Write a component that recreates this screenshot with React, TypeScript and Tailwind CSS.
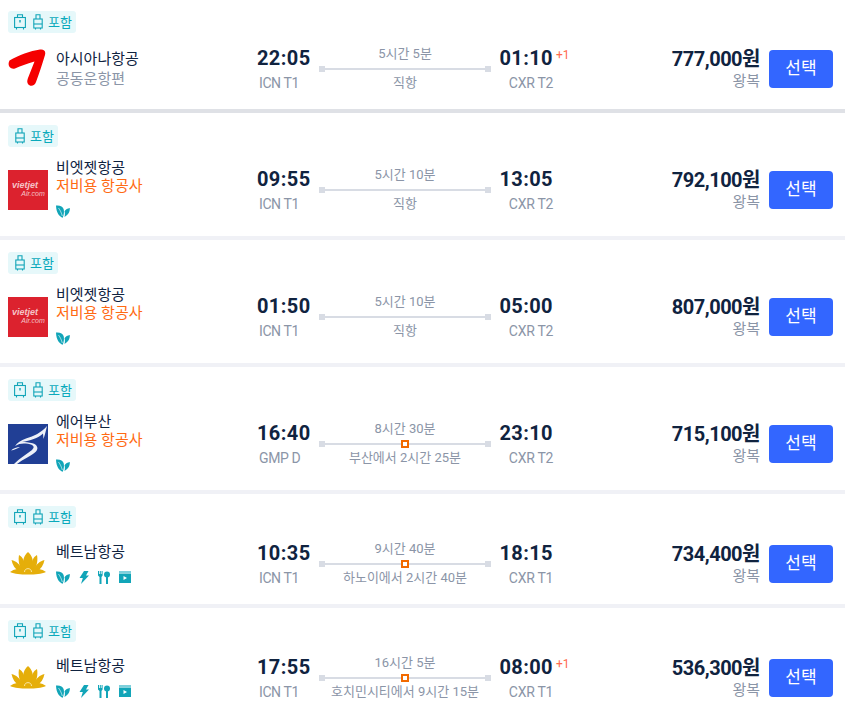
const TXT = "font-['Roboto','Noto_Sans_CJK_KR',sans-serif]";

function BagWide() {
  return (
    <svg width="12" height="16" viewBox="0 0 12 16" fill="none" stroke="#12a5b8" strokeWidth="1.1">
      <path d="M3.500 3.500V.8h5v2.700" />
      <rect x=".6" y="3.500" width="10.800" height="10" />
      <path d="M6 6v2.500" strokeWidth="1.400" />
      <path d="M2.500 14v1.500M9.500 14v1.500" />
    </svg>
  );
}

function BagSlim() {
  return (
    <svg width="10" height="16" viewBox="0 0 10 16" fill="none" stroke="#12a5b8" strokeWidth="1.1">
      <path d="M3 5V.8h4V5" />
      <rect x=".8" y="5" width="8.400" height="9" />
      <path d="M.8 10h8.400" />
      <path d="M2.500 14v1.500M7.500 14v1.500" />
    </svg>
  );
}

function Leaf() {
  return (
    <svg width="14" height="13" viewBox="0 0 14 13" fill="#12a5b8">
      <path d="M0 .5c3.800-.4 7 .8 7.800 4.200.5 2.800-.2 5.500-1 8C3 11.500.4 8 0 .5z" />
      <path d="M13.800 3c.2 3.500-1.200 6.500-5.300 9 .5-2.200.6-4 0-5.800C9.800 4.500 11.500 3.300 13.800 3z" />
      <path d="M2.500 3c1.800 2.300 3 5 3.800 8" stroke="#fff" strokeWidth=".6" fill="none" />
    </svg>
  );
}

function Bolt() {
  return (
    <svg width="10" height="13" viewBox="0 0 10 13" fill="#12a5b8">
      <path d="M5 0h4.500L7 4.500h3L2 13l1.800-6H.5z" />
    </svg>
  );
}

function Meal() {
  return (
    <svg width="12" height="13" viewBox="0 0 12 13" fill="#12a5b8">
      <path d="M0 0h1v3h.8V0h1v3h.8V0h1v4.500L3.500 6v7h-2V6L0 4.500z" />
      <circle cx="9" cy="3.500" r="3" />
      <rect x="8" y="5" width="2" height="8" />
    </svg>
  );
}

function Screen() {
  return (
    <svg width="12" height="12" viewBox="0 0 12 12">
      <rect x="0" y="0" width="12" height="2" fill="#7fd0dc" />
      <rect x="0" y="2.500" width="12" height="9.500" fill="#12a5b8" />
      <path d="M4.500 5l3.500 2-3.500 2z" fill="#fff" />
    </svg>
  );
}

function Asiana() {
  return (
    <div className="w-10 h-10 shrink-0">
      <svg width="40" height="40" viewBox="0 0 40 40">
        <path
          d="M1.500 11.500 C 11 6 22 2 32 .5 C 36 0 38 2 37 6 C 34 16 31 25 28 33 C 27 37 22 38 20 35 C 19 33 19 32 20 29 L 26.500 12.500 C 20 14 13 17 7 19.500 C 2 21 -1 16 1.500 11.500 Z"
          fill="#f50000"
        />
      </svg>
    </div>
  );
}

function Vietjet() {
  return (
    <div className="w-10 h-10 shrink-0 bg-[#dc222e] flex flex-col items-center justify-center italic font-['Liberation_Sans',sans-serif] text-[#f5c4c8]">
      <span className="text-[9px] leading-[9px] -ml-[6px] font-bold">vietjet</span>
      <span className="text-[7px] leading-[8px] ml-[10px]">Air.com</span>
    </div>
  );
}

function AirBusan() {
  return (
    <div className="w-10 h-10 shrink-0">
      <svg width="40" height="40" viewBox="0 0 40 40">
        <rect width="40" height="40" fill="#213f95" />
        <path
          d="M39 2 C 33 9 26 12 18 14.500 C 13 16 9 19 7 22 C 11 19.500 15 19 20 19.800 C 26 21 27 23 24 26 C 19 30 12 34 6 40 L 9 40 C 15 35 24 31.500 28 27.500 C 31 24.500 29 20.500 24.500 19.300 C 21 18.500 17 18 14 18 C 22 16.500 30 14.500 35 9.500 L 35.500 15 C 37 11 38 6 39 2 Z"
          fill="#eef1f8"
        />
        <path d="M3 26.500 C 5 24.500 9 23 12 23 C 10 24 6 26 3 26.500 Z" fill="#eef1f8" />
      </svg>
    </div>
  );
}

function Lotus() {
  return (
    <div className="w-10 h-10 shrink-0 flex items-center justify-center">
      <svg width="36" height="24" viewBox="0 0 36 24" fill="#e5ae0a">
        <path d="M18 0 C 22.500 4 24 9 22 16 L 14 16 C 12 9 13.500 4 18 0 Z" />
        <path d="M9 3 C 13 5 15 10 15 17 L 12 18 C 9 14 8 8 9 3 Z" />
        <path d="M27 3 C 23 5 21 10 21 17 L 24 18 C 27 14 28 8 27 3 Z" />
        <path d="M1.500 8 C 6 9 10 12 12.500 18 L 9 19 C 5 17 2.500 13 1.500 8 Z" />
        <path d="M34.500 8 C 30 9 26 12 23.500 18 L 27 19 C 31 17 33.500 13 34.500 8 Z" />
        <path d="M0 20 C 4 17 10 16 14 16 L 22 16 C 26 16 32 17 36 20 C 31 22 26 22.500 18 22.500 C 10 22.500 5 22 0 20 Z" />
        <path d="M14.500 20 C 14.500 15.500 21.500 15.500 21.500 20" stroke="#fff3c8" strokeWidth=".8" fill="none" />
      </svg>
    </div>
  );
}

interface Flight {
  bags: number;
  logo: 'asiana' | 'vietjet' | 'busan' | 'vn';
  airline: string;
  sub?: string;
  subOrange?: boolean;
  amenities?: 'leaf' | 'all';
  dep: string;
  depApt: string;
  dur: string;
  via: string;
  stop?: boolean;
  arr: string;
  plus?: boolean;
  arrApt: string;
  price: string;
  sep?: string;
  top?: string;
}

const flights: Flight[] = [
  { bags: 2, logo: 'asiana', airline: '아시아나항공', sub: '공동운항편', dep: '22:05', depApt: 'ICN T1', dur: '5시간 5분', via: '직항', arr: '01:10', plus: true, arrApt: 'CXR T2', price: '777,000', sep: 'border-[#dfe1e6]', top: '-mt-px' },
  { bags: 1, logo: 'vietjet', airline: '비엣젯항공', sub: '저비용 항공사', subOrange: true, amenities: 'leaf', dep: '09:55', depApt: 'ICN T1', dur: '5시간 10분', via: '직항', arr: '13:05', arrApt: 'CXR T2', price: '792,100' },
  { bags: 1, logo: 'vietjet', airline: '비엣젯항공', sub: '저비용 항공사', subOrange: true, amenities: 'leaf', dep: '01:50', depApt: 'ICN T1', dur: '5시간 10분', via: '직항', arr: '05:00', arrApt: 'CXR T2', price: '807,000' },
  { bags: 2, logo: 'busan', airline: '에어부산', sub: '저비용 항공사', subOrange: true, amenities: 'leaf', dep: '16:40', depApt: 'GMP D', dur: '8시간 30분', via: '부산에서 2시간 25분', stop: true, arr: '23:10', arrApt: 'CXR T2', price: '715,100' },
  { bags: 2, logo: 'vn', airline: '베트남항공', amenities: 'all', dep: '10:35', depApt: 'ICN T1', dur: '9시간 40분', via: '하노이에서 2시간 40분', stop: true, arr: '18:15', arrApt: 'CXR T1', price: '734,400' },
  { bags: 2, logo: 'vn', airline: '베트남항공', amenities: 'all', dep: '17:55', depApt: 'ICN T1', dur: '16시간 5분', via: '호치민시티에서 9시간 15분', stop: true, arr: '08:00', plus: true, arrApt: 'CXR T1', price: '536,300' },
];

function Amenities({ kind }: { kind: 'leaf' | 'all' }) {
  return (
    <div className="flex items-center gap-[9px] h-3">
      <Leaf />
      {kind === 'all' && (
        <>
          <Bolt />
          <Meal />
          <Screen />
        </>
      )}
    </div>
  );
}

function FlightRow({ f }: { f: Flight }) {
  const tall = !!f.subOrange;
  return (
    <div className={`pt-3 pb-3 pl-2 pr-3 border-b-4 ${f.sep ?? 'border-[#f0f1f6]'} ${f.top ?? ''}`}>
      <div className={`flex w-fit items-center h-[22px] pr-1 rounded-[3px] bg-[#e6f8fa] ${f.bags === 2 ? 'pl-[6px]' : 'pl-[7px]'}`}>
        {f.bags === 2 && (
          <span className="mr-[7px] flex">
            <BagWide />
          </span>
        )}
        <BagSlim />
        <span className="ml-[5px] text-[13px] text-[#0aa9bb] leading-none">포함</span>
      </div>
      <div className={`mt-2 flex items-center ${tall ? 'h-[69px]' : 'h-14'}`}>
        {f.logo === 'asiana' && <Asiana />}
        {f.logo === 'vietjet' && <Vietjet />}
        {f.logo === 'busan' && <AirBusan />}
        {f.logo === 'vn' && <Lotus />}
        <div className="ml-2 w-[192px] self-start">
          <div className={`text-[15px] leading-[18px] text-[#10233f] ${tall ? 'pt-1' : f.sub ? 'pt-[9px]' : 'pt-[7px]'}`}>{f.airline}</div>
          {f.sub && (
            <div className={f.subOrange ? 'text-[15px] leading-[18px] text-[#ff6a13]' : 'text-[15px] leading-[20px] mt-px text-[#8b95a7]'}>{f.sub}</div>
          )}
          {f.amenities && (
            <div className="mt-[10px]">
              <Amenities kind={f.amenities} />
            </div>
          )}
        </div>
        <div className="w-[71px] shrink-0 pl-[9px] flex flex-col items-start">
          <span className="text-xl leading-[26px] font-bold text-[#10233f] tracking-[0.4px]">{f.dep}</span>
          <span className="ml-[2px] text-sm leading-[20px] text-[#8b95a7] mt-[2px] tracking-[-0.4px]">{f.depApt}</span>
        </div>
        <div className="w-[172px] shrink-0 flex flex-col items-center">
          <span className="text-[13px] leading-[16px] text-[#8b95a7]">{f.dur}</span>
          <div className="relative w-full h-[6px] mt-1 mb-[2px] flex items-center justify-between">
            <span className="w-[6px] h-[6px] bg-[#d8dce4]" />
            <span className="flex-1 h-[2px] bg-[#d8dce4]" />
            <span className="w-[6px] h-[6px] bg-[#d8dce4]" />
            {f.stop && (
              <span className="absolute left-[82px] top-[-1px] w-2 h-2 bg-white border-2 border-[#f26a00]" />
            )}
          </div>
          <span className="text-[13px] leading-[18px] text-[#8b95a7] whitespace-nowrap">{f.via}</span>
        </div>
        <div className="ml-[9px] w-[53px] shrink-0 flex flex-col items-end relative">
          <span className="text-xl leading-[26px] font-bold text-[#10233f] tracking-[0.4px]">{f.arr}</span>
          <span className="text-sm leading-[20px] text-[#8b95a7] mt-[2px] tracking-[-0.3px]">{f.arrApt}</span>
          {f.plus && (
            <span className="absolute left-[56px] top-[3px] text-xs leading-[14px] text-[#ff6a4d]">+1</span>
          )}
        </div>
        <div className="flex-1 mb-[2px] flex flex-col items-end">
          <span className="text-[20px] leading-[26px] font-bold text-[#10233f] tracking-[-0.5px]">{f.price}원</span>
          <span className="text-[15px] leading-[18px] text-[#8b95a7]">왕복</span>
        </div>
        <button className="ml-[9px] w-16 h-[38px] rounded-[4px] bg-[#3366ff] text-white text-[17px]">선택</button>
      </div>
    </div>
  );
}

export default function App() {
  return (
    <div className={`w-[845px] h-[714px] overflow-hidden bg-white ${TXT}`}>
      {flights.map((f, i) => (
        <FlightRow key={i} f={f} />
      ))}
    </div>
  );
}
